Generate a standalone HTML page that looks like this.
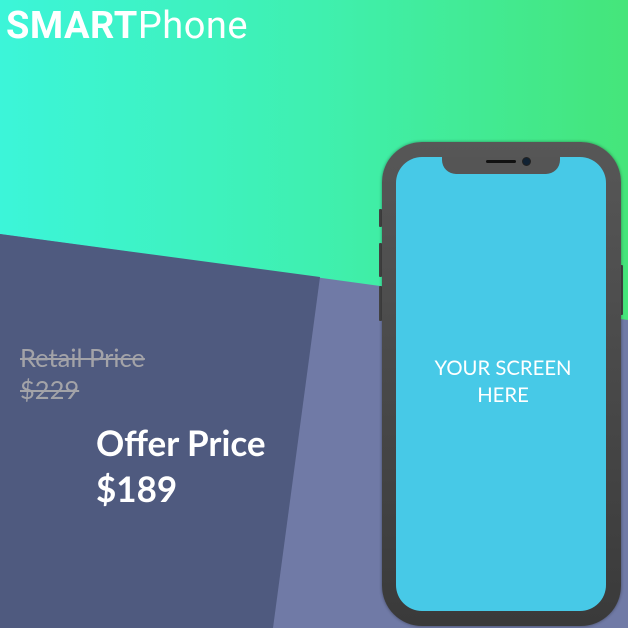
<!DOCTYPE html>
<html><head><meta charset="utf-8"><style>
html,body{margin:0;padding:0}
body{width:628px;height:628px;position:relative;overflow:hidden;background:linear-gradient(90deg,#3cf5d9 0%,#3ff0b0 50%,#45e57a 100%);font-family:"Lato","Liberation Sans",sans-serif}
.t{position:absolute;left:6px;top:2px;color:#fff;font-size:38px;line-height:48px;font-family:"Roboto","Liberation Sans",sans-serif;letter-spacing:0.5px}
svg.bg{position:absolute;left:0;top:0}
.r1,.r2{position:absolute;left:20px;color:#a3a3a8;font-size:25.5px;text-decoration:line-through;line-height:32px}
.r1{top:342px}.r2{top:374px}
.o1,.o2{position:absolute;left:96px;color:#fff;font-weight:bold;font-size:35px;line-height:44px}
.o1{top:421px}.o2{top:467px}
.phone{position:absolute;left:382px;top:142px;width:239px;height:484px;border-radius:40px;background:linear-gradient(#575757,#3a3a3a);box-shadow:0 0 3px rgba(0,0,0,.4)}
.scr{position:absolute;left:14px;top:15px;width:210px;height:454px;border-radius:26px;background:#47c9e7;color:#fff;text-align:center}
.scr p{margin:0;position:absolute;top:198px;left:4px;right:0;font-size:20.3px;line-height:27px}
.notch{position:absolute;left:60px;top:15px;width:118px;height:17px;background:#555;border-radius:0 0 14px 14px}
.spk{position:absolute;left:104px;top:18px;width:30px;height:3px;background:#111;border-radius:2px}
.cam{position:absolute;left:140px;top:15px;width:7px;height:7px;background:#123;border-radius:50%;border:1px solid #222}
.btn{position:absolute;width:3px;background:#444;border-radius:1px}
</style></head><body>
<svg class="bg" width="628" height="628"><polygon points="0,234 628,320 628,628 0,628" fill="#707aa6"/><polygon points="0,234 320,277 273,628 0,628" fill="#4f5a7f"/></svg>
<div class="t"><b>SMART</b>Phone</div>
<div class="r1">Retail Price</div>
<div class="r2">$229</div>
<div class="o1">Offer Price</div>
<div class="o2">$189</div>
<div class="btn" style="left:379px;top:209px;height:18px"></div>
<div class="btn" style="left:379px;top:243px;height:34px"></div>
<div class="btn" style="left:379px;top:286px;height:35px"></div>
<div class="btn" style="left:620px;top:265px;height:50px"></div>
<div class="phone"><div class="scr"><p>YOUR SCREEN<br>HERE</p></div><div class="notch"></div><div class="spk"></div><div class="cam"></div></div>
</body></html>
